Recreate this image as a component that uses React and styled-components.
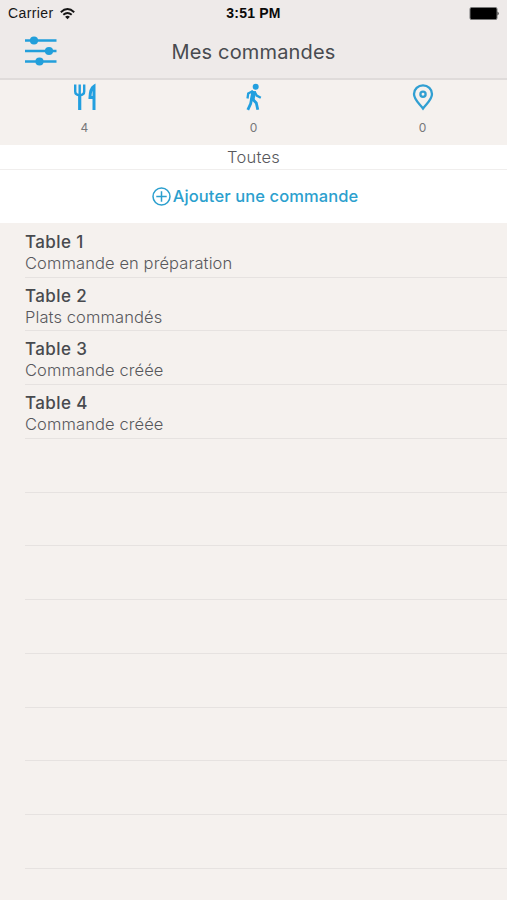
import React from 'react';
import styled, { createGlobalStyle } from 'styled-components';

const GlobalStyle = createGlobalStyle`
  * {
    box-sizing: border-box;
  }

  body {
    margin: 0;
    background: #f5f1ee;
    font-family: Inter, "Liberation Sans", sans-serif;
  }

  p, h1 {
    margin: 0;
  }

  svg {
    display: block;
  }
`

const Screen = styled.div`
  height: 900px;
  overflow: hidden;
  display: flex;
  flex-direction: column;
  background: #f5f1ee;
`

const Header = styled.header`
  height: 80px;
  flex: none;
  background: #eeeae9;
  border-bottom: 2px solid #dfdbda;
`

const StatusBar = styled.div`
  height: 27px;
  padding: 0 7px 0 8px;
  display: grid;
  grid-template-columns: 1fr auto 1fr;
  align-items: center;
  font-family: "Liberation Sans", sans-serif;
  font-size: 14px;
  line-height: 27px;
  color: #161616;

  b {
    margin-right: 1px;
    font-size: 14px;
    letter-spacing: 0.2px;
    color: #0a0a0a;
  }
`

const Carrier = styled.div`
  display: flex;
  align-items: center;
  gap: 6px;
  letter-spacing: 0.4px;
`

const Battery = styled.svg`
  justify-self: end;
`

const NavBar = styled.div`
  height: 50px;
  padding: 0 24px;
  display: grid;
  grid-template-columns: 34px 1fr 34px;
  align-items: center;
`

const MenuButton = styled.button`
  padding: 0 0 3px;
  border: none;
  background: none;
  cursor: pointer;
`

const Title = styled.h1`
  text-align: center;
  font-size: 20px;
  font-weight: 400;
  line-height: 50px;
  letter-spacing: 0.15px;
  color: #484b50;
`

const Counters = styled.div`
  height: 65px;
  flex: none;
  display: grid;
  grid-template-columns: repeat(3, 1fr);
`

const Counter = styled.div`
  display: flex;
  flex-direction: column;
  align-items: center;
  padding-top: 3px;

  span {
    margin-top: 8px;
    font-size: 12px;
    line-height: 18px;
    color: #77777a;
  }
`

const FilterLabel = styled.p`
  height: 24px;
  flex: none;
  background: #fff;
  text-align: center;
  font-size: 16.5px;
  font-weight: 300;
  line-height: 25px;
  letter-spacing: 0.25px;
  color: #58585c;
`

const AddButton = styled.button`
  height: 54px;
  flex: none;
  padding: 0 0 1px 3px;
  display: flex;
  align-items: center;
  justify-content: center;
  gap: 2px;
  border: none;
  border-top: 1px solid #f0eeed;
  background: #fff;
  font-family: inherit;
  font-size: 16.5px;
  font-weight: 500;
  letter-spacing: 0.1px;
  color: #2b9fce;
  cursor: pointer;
`

const OrderList = styled.ul`
  margin: 0;
  padding: 0.75px 0 0 25px;
  list-style: none;
`

const OrderRow = styled.li`
  height: 53.75px;
  padding-top: 7px;
  border-bottom: 1px solid #e6e2e0;
`

const OrderName = styled.p`
  font-size: 17px;
  font-weight: 500;
  line-height: 22px;
  letter-spacing: 0.4px;
  color: #484a4e;
`

const OrderStatus = styled.p`
  font-size: 16.5px;
  font-weight: 300;
  line-height: 20px;
  letter-spacing: 0.1px;
  color: #58585c;
`

const WifiIcon = () => (
  <svg width="15" height="12" viewBox="0 0 15 12" fill="none" stroke="#161616" strokeWidth="1.9">
    <path d="M0.8 4.2 Q7.5 -2 14.2 4.2" />
    <path d="M3.3 6.8 Q7.5 3 11.7 6.8" />
    <path d="M7.5 11.3 L5.1 8.7 Q7.5 6.9 9.9 8.7 Z" fill="#161616" stroke="none" />
  </svg>
)

const SlidersIcon = () => (
  <svg width="34" height="30" viewBox="0 0 34 30" fill="#229fdb">
    <path d="M1 4.5 H32.5 M1 15 H32.5 M1 25.5 H32.5" stroke="#229fdb" strokeWidth="2.3" />
    <circle cx="10" cy="4.5" r="4.1" />
    <circle cx="25" cy="15" r="4.1" />
    <circle cx="15.5" cy="25.5" r="4.1" />
  </svg>
)

const CutleryIcon = () => (
  <svg width="24" height="28" viewBox="0 0 24 28" fill="none" stroke="#229fdf">
    <path d="M2.2 1.5 V8.5 Q2.2 12 6.7 12 Q11.2 12 11.2 8.5 V1.5 M6.7 1.5 V12" strokeWidth="2.4" />
    <path d="M6.7 11 V27" strokeWidth="3.2" />
    <path d="M21 27 V3.2 Q17.2 5.5 17 14.5 H20" strokeWidth="3" />
  </svg>
)

const WalkIcon = () => (
  <svg width="24" height="28" viewBox="0 0 24 28" fill="none" stroke="#229fdf">
    <circle cx="13.7" cy="3.8" r="3" fill="#229fdf" stroke="none" />
    <path d="M11.8 8 L10.2 17" strokeWidth="4.6" />
    <path d="M11 8 L6.2 10.5 L5.5 15.5 M12.5 8.5 L14.7 12.6 L18.8 14.7" strokeWidth="2.3" />
    <path d="M9.5 16 L8.7 20.5 L5.8 26.8 M10.5 16 L14.3 20 L15.8 26.8" strokeWidth="2.8" />
  </svg>
)

const PinIcon = () => (
  <svg width="24" height="28" viewBox="0 0 24 28" fill="none" stroke="#309fd2" strokeWidth="2.3">
    <path d="M12 25.5 C9 21 3 17 3 11 A9 8.7 0 0 1 21 11 C21 17 15 21 12 25.5 Z" />
    <circle cx="12" cy="11.3" r="2.6" />
  </svg>
)

const PlusIcon = () => (
  <svg width="19" height="19" viewBox="0 0 19 19" fill="none" stroke="#2b9fce" strokeWidth="1.5">
    <circle cx="9.5" cy="9.5" r="8.5" />
    <path d="M9.5 4.3 V14.7 M4.3 9.5 H14.7" />
  </svg>
)

const COUNTERS = [
  { id: "table", icon: <CutleryIcon />, count: 4 },
  { id: "takeaway", icon: <WalkIcon />, count: 0 },
  { id: "delivery", icon: <PinIcon />, count: 0 },
]

const ORDERS = [
  { name: "Table 1", status: "Commande en préparation" },
  { name: "Table 2", status: "Plats commandés" },
  { name: "Table 3", status: "Commande créée" },
  { name: "Table 4", status: "Commande créée" },
]

const EMPTY_ROWS = 9;

const App = () => {
  return (
    <>
      <GlobalStyle />
      <Screen>
        <Header>
          <StatusBar>
            <Carrier>Carrier <WifiIcon /></Carrier>
            <b>3:51 PM</b>
            <Battery width="31" height="13" viewBox="0 0 31 13">
              <rect x="1" y="0.5" width="27" height="12" rx="1.5" fill="#000" stroke="#777" />
              <path d="M28.5 4.5 Q31 6.5 28.5 8.5 Z" fill="#333" />
            </Battery>
          </StatusBar>
          <NavBar>
            <MenuButton><SlidersIcon /></MenuButton>
            <Title>Mes commandes</Title>
          </NavBar>
        </Header>
        <Counters>
          {COUNTERS.map(item => (
            <Counter key={item.id}>
              {item.icon}
              <span>{item.count}</span>
            </Counter>
          ))}
        </Counters>
        <FilterLabel>Toutes</FilterLabel>
        <AddButton><PlusIcon />Ajouter une commande</AddButton>
        <OrderList>
          {ORDERS.map(order => (
            <OrderRow key={order.name}>
              <OrderName>{order.name}</OrderName>
              <OrderStatus>{order.status}</OrderStatus>
            </OrderRow>
          ))}
          {Array.from({ length: EMPTY_ROWS }, (_, ind) => <OrderRow key={ind + "_empty"} />)}
        </OrderList>
      </Screen>
    </>
  )
}

export default App;
